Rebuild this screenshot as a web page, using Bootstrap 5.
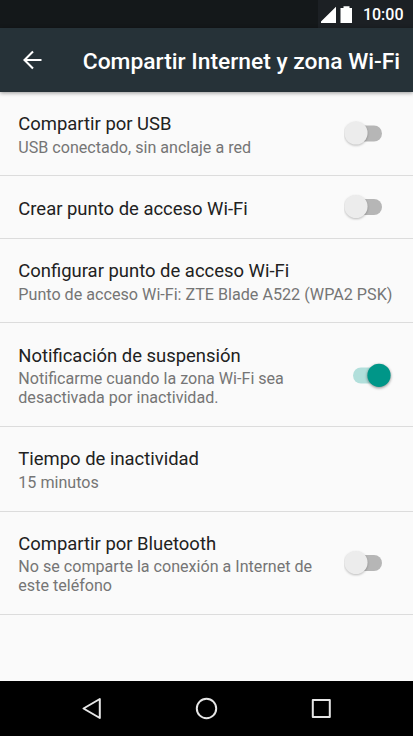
<!DOCTYPE html>
<html lang="es">
<head>
<meta charset="utf-8">
<meta name="viewport" content="width=device-width, initial-scale=1">
<title>Compartir Internet y zona Wi-Fi</title>
<link href="https://cdn.jsdelivr.net/npm/bootstrap@5.3.0/dist/css/bootstrap.min.css" rel="stylesheet">
<style>
body{font-family:Roboto,sans-serif;background:#fafafa;height:736px;overflow:hidden}
.statusbar{height:28px;background:linear-gradient(90deg,#14181a 318px,#1c2024 318px);color:#fff;font-size:16px;font-weight:500;padding:1px 9.500px 0 0}
.appbar{height:64px;background:#263238;color:#fff;padding:2px 0 0 20px;box-shadow:0 1px 4px rgba(0,0,0,.4)}
.appbar h1{font-size:22.8px;font-weight:500;margin-left:37.800px;line-height:28px;white-space:nowrap;padding-top:2px}
.setting{padding:0 19px 0 18.300px;border-bottom:1px solid #dcdcdc}
.setting h2{font-size:18.45px;line-height:24px;font-weight:400;color:#212121;white-space:nowrap}
.setting p{font-size:16.1px;line-height:19px;color:#757575;white-space:nowrap;padding-top:1px}
.h-usb,.h-cfg{height:84px;padding-top:1px}
.h-ap{height:63px;padding-top:2px}
.h-sus{height:104px;padding-top:2px}
.h-time{height:85px}
.h-bt{height:103px}
.h-usb p,.h-cfg p,.h-time p{padding-top:2px}
.h-cfg p{font-size:16.15px}
.toggle-off,.toggle-on{width:46px;height:30px;flex:none}
.toggle-off{margin-right:4px}
.toggle-off circle{fill:#ececec;filter:drop-shadow(0 1px 1px rgba(0,0,0,.25))}
.toggle-on circle{fill:#009688;filter:drop-shadow(0 1px 1.5px rgba(0,0,0,.45))}
.h-ap h2{padding-top:1px}
.h-ap .toggle-off{margin-top:-2px}
.navkeys{height:55px;background:#000}
.navkeys svg{fill:none;stroke:#e6e6e6;stroke-width:2;stroke-linejoin:round}
</style>
</head>
<body class="d-flex flex-column">
<div class="statusbar d-flex align-items-center justify-content-end flex-shrink-0">
<svg width="34" height="18" viewBox="0 0 34 18" fill="#fff"><path d="M-1.500 17L15 .8V17zM19.500 2h3V.3h6V2H31v15H19.500z"/></svg><span class="ms-2">10:00</span></div>
<header class="appbar d-flex align-items-center flex-shrink-0">
<svg width="25" height="28" viewBox="0 0 25 28" fill="none" stroke="#fff" stroke-width="2.100"><path d="M21.500 13H5M13 4.500L4.500 13l8.500 8.500"/></svg>
<h1 class="mb-0">Compartir Internet y zona Wi-Fi</h1></header>
<main class="flex-grow-1">
<section class="setting h-usb d-flex align-items-center justify-content-between"><div><h2 class="mb-0">Compartir por USB</h2><p class="mb-0">USB conectado, sin anclaje a red</p></div>
<svg class="toggle-off" viewBox="0 0 46 30"><rect x="10" y="6.500" width="28" height="16" rx="8" fill="#b6b6b6"/><circle cx="12" cy="14" r="11.600"/></svg></section>
<section class="setting h-ap d-flex align-items-center justify-content-between"><h2 class="mb-0">Crear punto de acceso Wi-Fi</h2>
<svg class="toggle-off" viewBox="0 0 46 30"><rect x="10" y="7" width="28" height="16" rx="8" fill="#b6b6b6"/><circle cx="12" cy="14.500" r="11.600"/></svg></section>
<section class="setting h-cfg d-flex align-items-center"><div><h2 class="mb-0">Configurar punto de acceso Wi-Fi</h2><p class="mb-0">Punto de acceso Wi-Fi: ZTE Blade A522 (WPA2 PSK)</p></div></section>
<section class="setting h-sus d-flex align-items-center justify-content-between"><div><h2 class="mb-0">Notificación de suspensión</h2><p class="mb-0">Notificarme cuando la zona Wi-Fi sea<br>desactivada por inactividad.</p></div>
<svg class="toggle-on" viewBox="0 0 46 30"><rect x="5" y="6.500" width="28" height="16" rx="8" fill="#b2dfdb"/><circle cx="31" cy="14.300" r="11.600"/></svg></section>
<section class="setting h-time d-flex align-items-center"><div><h2 class="mb-0">Tiempo de inactividad</h2><p class="mb-0">15 minutos</p></div></section>
<section class="setting h-bt d-flex align-items-center justify-content-between"><div><h2 class="mb-0">Compartir por Bluetooth</h2><p class="mb-0">No se comparte la conexión a Internet de<br>este teléfono</p></div>
<svg class="toggle-off" viewBox="0 0 46 30"><rect x="10" y="7" width="28" height="16" rx="8" fill="#b6b6b6"/><circle cx="12" cy="14.500" r="11.600"/></svg></section>
</main>
<nav class="navkeys flex-shrink-0 d-flex align-items-center justify-content-center">
<svg width="413" height="55" viewBox="0 0 413 55"><path d="M83.500 27.500L99.800 18v19z"/><circle cx="206.500" cy="27.500" r="9.700"/><rect x="312.800" y="19" width="17" height="17"/></svg>
</nav>
<script src="https://cdn.jsdelivr.net/npm/bootstrap@5.3.0/dist/js/bootstrap.bundle.min.js"></script>
</body>
</html>
